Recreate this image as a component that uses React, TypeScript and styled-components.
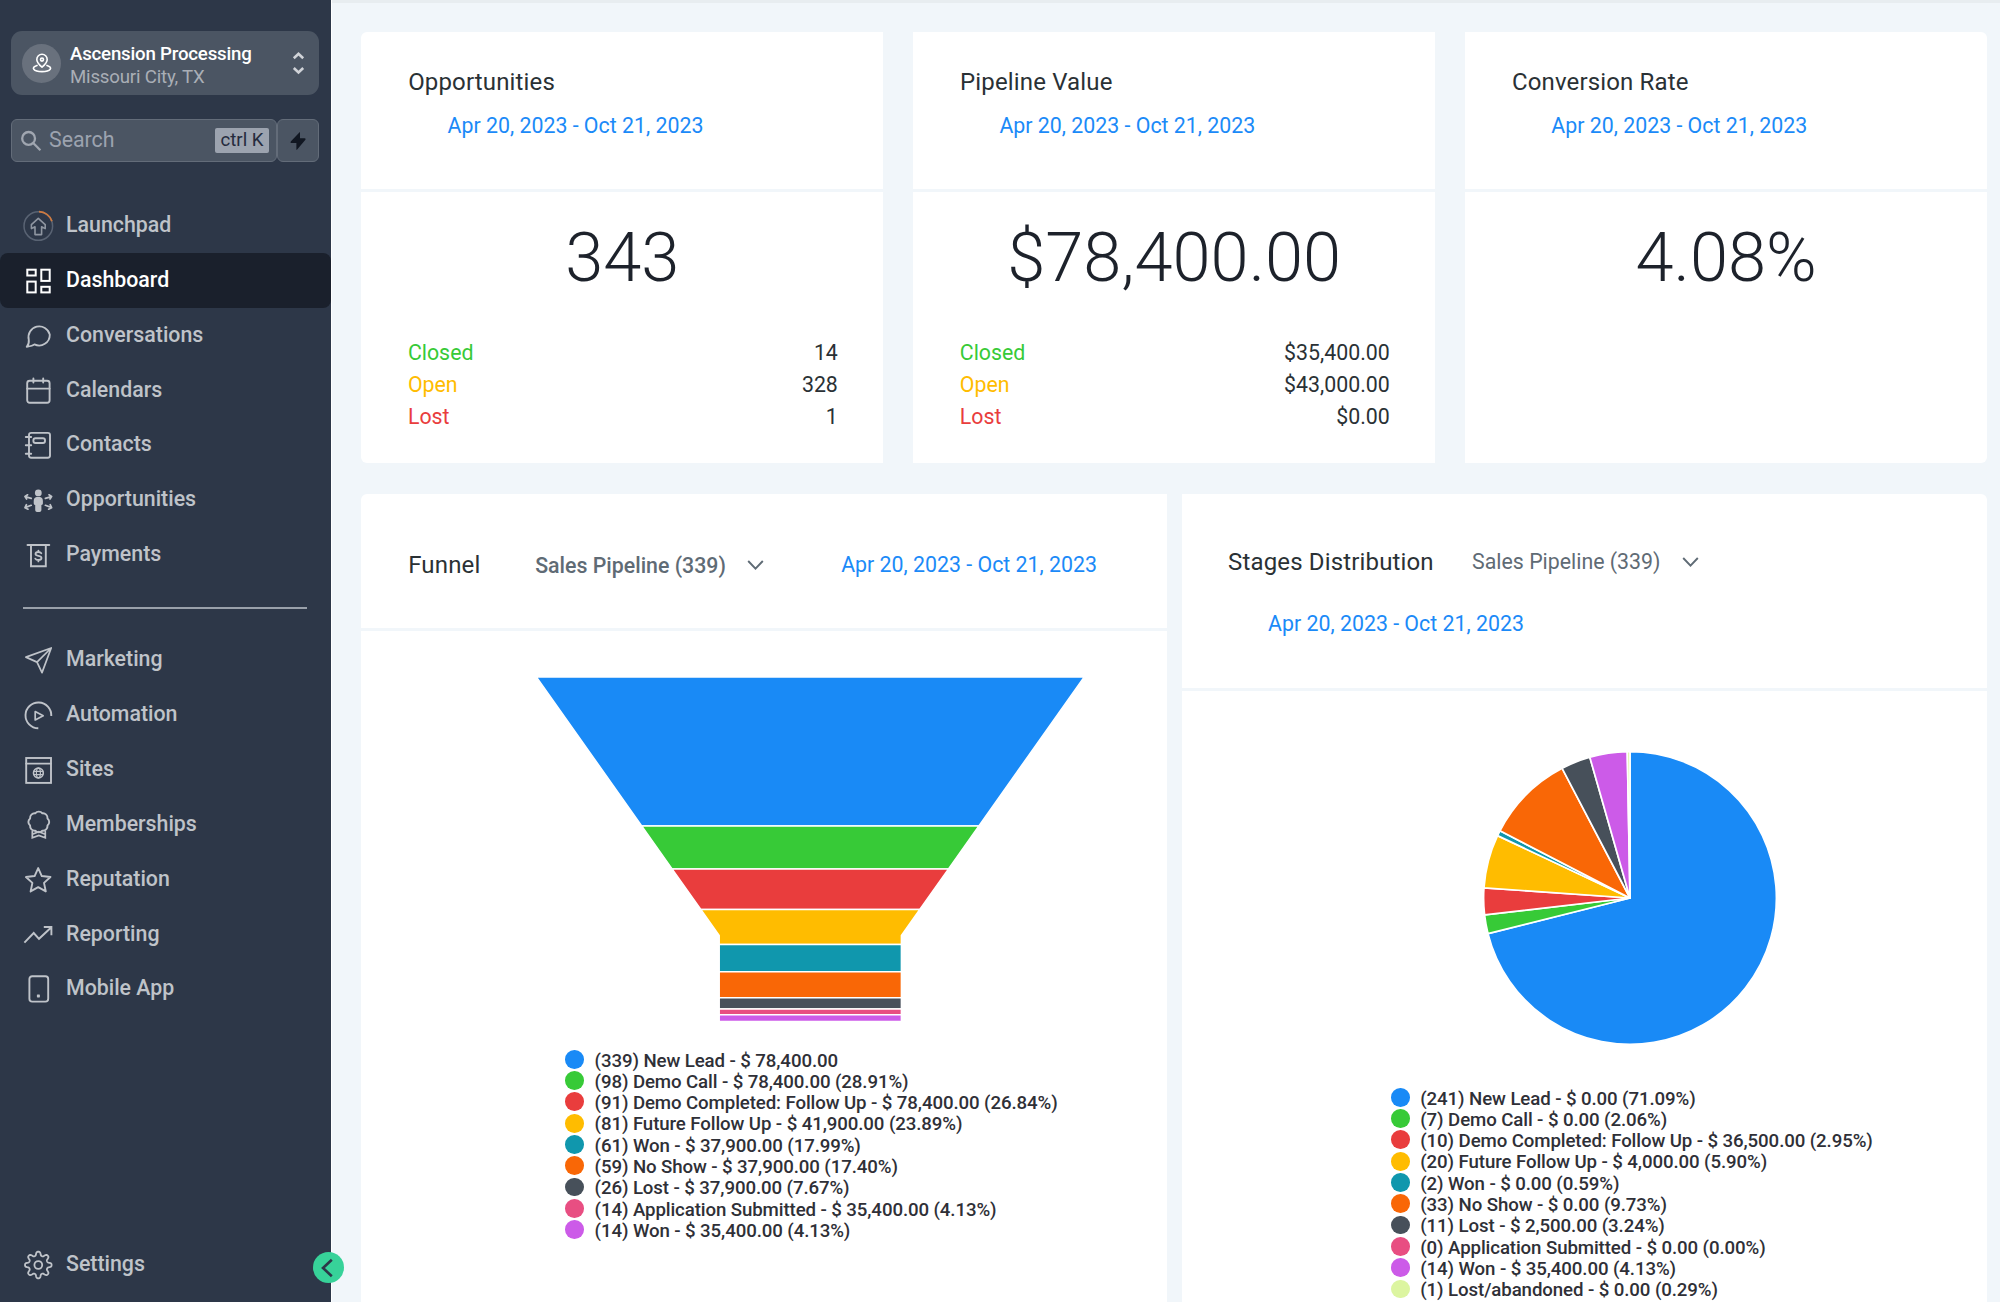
import React from 'react';
import styled, { createGlobalStyle } from 'styled-components';

const GlobalStyle = createGlobalStyle`
  * { box-sizing: border-box; }
  body { margin: 0; background: #f1f6fa; overflow: hidden; }
`;

const Page = styled.div`
  display: flex;
  width: 2000px;
  height: 1302px;
  overflow: hidden;
  font-family: Roboto, 'Liberation Sans', sans-serif;
  font-size: 21.33px;
  color: #2a3135;
`;

/* Sidebar */

const Sidebar = styled.aside`
  position: relative;
  display: flex;
  flex-direction: column;
  flex: none;
  width: 332px;
  height: 1302px;
  padding-top: 31px;
  background: #2d3748;
  border-right: 1px solid #fff;
`;

const Account = styled.div`
  display: flex;
  align-items: center;
  height: 64px;
  margin: 0 12px 0 11px;
  padding: 0 13px 0 11px;
  border-radius: 11px;
  background: #4b5563;
`;

const Avatar = styled.div`
  display: flex;
  align-items: center;
  justify-content: center;
  width: 39px;
  height: 39px;
  border-radius: 50%;
  background: #69717d;
`;

const AccountText = styled.div`
  flex: 1;
  margin-left: 9px;
  padding-top: 5px;
  font-size: 18.67px;
  line-height: 23px;
  letter-spacing: -0.2px;
  white-space: nowrap;
`;

const AccountName = styled.div`
  color: #fff;
  font-weight: 500;
`;

const AccountPlace = styled.div`
  color: #a9aeb6;
`;

const SearchRow = styled.div`
  display: flex;
  height: 43px;
  margin: 24px 12px 0 11px;
`;

const SearchBox = styled.div`
  display: flex;
  align-items: center;
  width: 266px;
  padding: 0 7px 0 8px;
  border: 1px solid #636c79;
  border-radius: 6px;
  background: #4b5563;
`;

const Placeholder = styled.span`
  flex: 1;
  margin-left: 7px;
  margin-top: -3px;
  color: #9ca3af;
`;

const Shortcut = styled.span`
  width: 54px;
  height: 25px;
  border-radius: 2px;
  background: #9ca3af;
  color: #252b3d;
  font-size: 18.67px;
  line-height: 24px;
  text-align: center;
  white-space: nowrap;
`;

const BoltButton = styled.div`
  display: flex;
  align-items: center;
  justify-content: center;
  flex: 1;
  border: 1px solid #636c79;
  border-radius: 6px;
  background: #4b5563;
`;

const Nav = styled.nav`
  display: flex;
  flex-direction: column;
`;

const MainNav = styled(Nav)`
  margin-top: 36.5px;
`;

const SettingsNav = styled(Nav)`
  margin-top: auto;
  margin-bottom: 9.3px;
`;

const NavItem = styled.div<{ $active?: boolean }>`
  display: flex;
  align-items: center;
  height: 54.83px;
  padding-left: 22px;
  border-radius: 8px;
  background: ${p => (p.$active ? '#1a202c' : 'transparent')};
  color: ${p => (p.$active ? '#fff' : '#bfc3c9')};
`;

const NavLabel = styled.span`
  margin-left: 12px;
  padding-bottom: 1.6px;
  font-weight: 500;
  line-height: 26px;
`;

const NavIcon = styled.svg`
  width: 32px;
  height: 32px;
  fill: none;
  stroke: currentColor;
  stroke-width: 1.9;
  stroke-linecap: round;
  stroke-linejoin: round;
`;

const Separator = styled.div`
  height: 2px;
  margin: 24.3px 24.5px 24.2px 23px;
  background: #99a0aa;
`;

const Collapse = styled.button`
  position: absolute;
  left: 313px;
  top: 1252px;
  display: flex;
  align-items: center;
  justify-content: center;
  width: 31px;
  height: 31px;
  padding: 0 3px 0 0;
  border: 0;
  border-radius: 50%;
  background: #37d299;
`;

/* Content */

const Main = styled.main`
  flex: 1;
  display: flex;
  flex-direction: column;
  border-top: 3px solid #e8edf0;
  padding: 29px 13px 0 29.4px;
  background: #f1f6fa;
`;

const StatGrid = styled.div`
  display: grid;
  grid-template-columns: repeat(3, 1fr);
  gap: 30px;
  height: 431px;
`;

const ChartGrid = styled.div`
  display: grid;
  grid-template-columns: repeat(2, 1fr);
  gap: 15px;
  flex: 1;
  margin-top: 31px;
`;

const Card = styled.section<{ $radius: string }>`
  background: #fff;
  border-radius: ${p => p.$radius};
`;

const StatHeader = styled.header`
  height: 160px;
  padding: 35px 46.8px 0;
  border-bottom: 3px solid #f1f6fa;
`;

const Title = styled.h2<{ $width?: number }>`
  margin: 0;
  width: ${p => (p.$width ? p.$width + 'px' : 'auto')};
  font-size: 24px;
  font-weight: 400;
  line-height: 30px;
  letter-spacing: 0.15px;
  white-space: nowrap;
`;

const DateRange = styled.div`
  color: #1b8af8;
  line-height: 28px;
  white-space: nowrap;
`;

const StatDate = styled(DateRange)`
  margin: 15px 0 0 39.4px;
`;

const BigNumber = styled.div`
  padding-top: 26px;
  color: #1d222b;
  font-size: 68.6px;
  font-weight: 300;
  line-height: 80px;
  text-align: center;
`;

const StatRows = styled.div`
  margin: 38.5px 45.4px 0 46.5px;
`;

const StatRow = styled.div`
  display: flex;
  justify-content: space-between;
  line-height: 32px;
`;

const StatLabel = styled.span<{ $color: string }>`
  color: ${p => p.$color};
`;

const FunnelHeader = styled.header`
  display: flex;
  align-items: center;
  height: 137px;
  padding: 8px 0 0 46.8px;
  border-bottom: 3px solid #f1f6fa;
`;

const FunnelDate = styled(DateRange)`
  margin-left: 77px;
`;

const StagesHeader = styled.header`
  height: 196.5px;
  padding: 52.7px 0 0 46.4px;
  border-bottom: 3px solid #f1f6fa;
`;

const StagesTop = styled.div`
  display: flex;
  align-items: center;
`;

const StagesDate = styled(DateRange)`
  margin: 33.3px 0 0 40px;
`;

const Picker = styled.div<{ $weight: number; $gap: number }>`
  display: flex;
  align-items: center;
  gap: ${p => p.$gap}px;
  color: #5f6b75;
  font-weight: ${p => p.$weight};
  line-height: 28px;
  white-space: nowrap;
`;

const PickerLabel = styled.span`
  width: 190px;
  padding-top: 1px;
`;

const FunnelSvg = styled.svg`
  display: block;
  width: 550px;
  height: 348px;
  margin: 44px 0 0 174px;
`;

const PieSvg = styled.svg`
  display: block;
  width: 294px;
  height: 294px;
  margin: 60px 0 0 301.4px;
`;

const Legend = styled.ul<{ $left: number; $top: number }>`
  margin: ${p => p.$top}px 0 0 ${p => p.$left}px;
  padding: 0;
  list-style: none;
  color: #2f3037;
  font-size: 18.67px;
  font-weight: 500;
  letter-spacing: -0.1px;
`;

const LegendItem = styled.li`
  display: flex;
  align-items: center;
  height: 21.33px;
  line-height: 21.33px;
  white-space: nowrap;
`;

const LegendDot = styled.i<{ $color: string }>`
  flex: none;
  width: 18.7px;
  height: 18.7px;
  margin: 0 10.7px 4px 0;
  border-radius: 50%;
  background: ${p => p.$color};
`;

/* Icons */

const polar = (cx: number, cy: number, r: number, a: number) => [
  cx + r * Math.cos(a),
  cy + r * Math.sin(a),
];

const gearPoints = Array.from({ length: 160 }, (_, i) => {
  const a = (i / 160) * Math.PI * 2;
  const wave = Math.tanh(1.6 * Math.cos(8 * a)) / Math.tanh(1.6);
  return polar(16.3, 16, 11.4 + 1.9 * wave, a).map(v => v.toFixed(2)).join(' ');
});

const badgePath =
  Array.from({ length: 9 }, (_, i) => {
    const [x, y] = polar(16.8, 13, 9.4, ((i + 0.5) / 8) * Math.PI * 2);
    return i === 0 ? `M${x} ${y}` : `A4.6 4.6 0 0 1 ${x} ${y}`;
  }).join('') + 'Z';

const starPoints = Array.from({ length: 10 }, (_, i) =>
  polar(16.2, 17, i % 2 ? 6.1 : 12.9, (i / 10) * Math.PI * 2 - Math.PI / 2).join(','),
).join(' ');

const icons: Record<string, React.ReactNode> = {
  Launchpad: (
    <>
      <circle cx="16.3" cy="16" r="14.3" stroke="#596373" strokeWidth="1.5" />
      <path d="M17 1.7A14.3 14.3 0 0 1 29.9 11.2" stroke="#cf7a3f" strokeWidth="1.8" strokeLinecap="butt" />
      <path d="M16.3 8.4 9.4 14.6V18.6L13 16.8V24.6H19.6V16.8L23.2 18.6V14.6Z" stroke="#8f96a1" strokeWidth="1.6" />
    </>
  ),
  Dashboard: (
    <g strokeLinejoin="miter" strokeWidth="2">
      <rect x="5.3" y="4.7" width="8.4" height="5.8" />
      <rect x="5.3" y="16.6" width="8.4" height="10.8" />
      <rect x="19.3" y="4.7" width="8.4" height="11.2" />
      <rect x="19.3" y="21.8" width="8.4" height="5.6" />
    </g>
  ),
  Conversations: (
    <path
      transform="translate(.9 .3) scale(1.28)"
      strokeWidth="1.45"
      d="M21 11.2A8.3 8.3 0 0 1 9 18.8Q7.8 19.8 3 20.8 5 18.5 4.6 15.2A8.3 8.3 0 1 1 21 11.2Z"
    />
  ),
  Calendars: (
    <>
      <rect x="5.2" y="6.8" width="22.4" height="22" rx="2.5" />
      <path d="M5.2 14.6H27.6M11.4 4.4V8.6M21.2 4.4V8.6" />
    </>
  ),
  Contacts: (
    <>
      <rect x="7" y="3.9" width="21" height="24.9" rx="2.2" />
      <rect x="11.4" y="9.2" width="11.6" height="4.8" rx="2" />
      <path d="M3.8 8H9.2M3.8 16.3H9.2M3.8 24.8H9.2" />
    </>
  ),
  Opportunities: (
    <>
      <g fill="currentColor" stroke="none">
        <circle cx="16.3" cy="8.9" r="3.4" />
        <path d="M14.6 13H18Q20.9 13.6 20.9 17V19.5Q20.6 21 19.4 21V26.3Q19.2 28 17.6 28H15Q13.4 28 13.2 26.3V21Q12 21 11.7 19.5V17Q11.7 13.6 14.6 13Z" />
      </g>
      <path
        strokeWidth="1.7"
        d="M9.2 14.4 3.2 12.6M5.6 10.8 3 12.5 4.6 15M23.4 14.4 29.4 12.6M27 10.8 29.6 12.5 28 15M9.2 21.3 3.6 23.4M4.4 20.7 3 23.7 6 25.2M23.4 21.3 29 23.4M28.2 20.7 29.6 23.7 26.6 25.2"
      />
    </>
  ),
  Payments: (
    <>
      <path d="M5.5 6H27.3M9 6.4V27.2H23.8V6.4" strokeLinejoin="miter" />
      <path
        strokeWidth="1.8"
        d="M19.3 14.2Q18.4 13 16.4 13 13.5 13 13.5 15 13.5 16.4 16.4 16.8 19.5 17.2 19.5 19 19.5 21 16.4 21 14.1 21 13.3 19.6M16.4 11.6V13M16.4 21V22.4"
      />
    </>
  ),
  Marketing: <path strokeWidth="1.7" d="M3.9 13.1 29.2 4 20 28.6 15 18.1ZM15 18.1 29.2 4" />,
  Automation: (
    <>
      <path strokeLinecap="butt" d="M16.3 29.3A12.9 12.9 0 1 1 29.3 17" />
      <path strokeWidth="1.7" d="M13.2 12.6V21L21.2 16.8Z" />
    </>
  ),
  Sites: (
    <>
      <rect x="4.2" y="4" width="24.8" height="24.9" strokeLinejoin="miter" />
      <path d="M4.2 9.6H29" />
      <circle cx="16.4" cy="19" r="4.9" strokeWidth="1.6" />
      <ellipse cx="16.4" cy="19" rx="2" ry="4.9" strokeWidth="1.2" />
      <path strokeWidth="1.2" d="M12 17.4H20.8M12 20.6H20.8" />
    </>
  ),
  Memberships: (
    <>
      <path d={badgePath} />
      <path d="M10.3 22.6V28.8L16.8 26.4 23.3 28.8V22.6M11 25 16.8 22.6 22.6 25" strokeWidth="1.7" strokeLinejoin="miter" />
    </>
  ),
  Reputation: <polygon points={starPoints} />,
  Reporting: <path strokeLinecap="butt" strokeLinejoin="miter" d="M2.4 24.6 11.7 15 17 20.8 29.4 9.3M21.8 9H29.4V17.2" />,
  'Mobile App': (
    <>
      <rect x="7.4" y="3.2" width="18.8" height="25.4" rx="2.8" />
      <rect x="14.9" y="21.4" width="3" height="3" rx=".6" fill="currentColor" stroke="none" />
    </>
  ),
  Settings: (
    <>
      <path d={'M' + gearPoints.join('L') + 'Z'} strokeWidth="1.8" />
      <circle cx="16.3" cy="16" r="3.9" strokeWidth="1.8" />
    </>
  ),
};

const NavEntry = ({ label, active }: { label: string; active?: boolean }) => (
  <NavItem $active={active}>
    <NavIcon viewBox="0 0 32 32">{icons[label]}</NavIcon>
    <NavLabel>{label}</NavLabel>
  </NavItem>
);

const ChevronDown = () => (
  <svg width="17" height="12" viewBox="0 0 17 12" fill="none" stroke="#5f6b75" strokeWidth="1.9">
    <path d="M1.2 2 8.5 9.6 15.8 2" />
  </svg>
);

/* Data */

const blue = '#198af6';
const palette = [blue, '#37ca37', '#e93d3d', '#ffbc00', '#1097ad', '#f96706', '#47505a', '#e84e82', '#cc5be8', '#dcf5a0'];

const stats = [
  {
    title: 'Opportunities',
    value: '343',
    rows: ['14', '328', '1'],
    radius: '6px 0 0 6px',
  },
  {
    title: 'Pipeline Value',
    value: '$78,400.00',
    rows: ['$35,400.00', '$43,000.00', '$0.00'],
    radius: '0',
  },
  { title: 'Conversion Rate', value: '4.08%', rows: [], radius: '0 6px 6px 0' },
];

const statuses = [
  ['Closed', '#37ca37'],
  ['Open', '#ffbc00'],
  ['Lost', '#e93d3d'],
];

const funnelLegend = [
  '(339) New Lead - $ 78,400.00',
  '(98) Demo Call - $ 78,400.00 (28.91%)',
  '(91) Demo Completed: Follow Up - $ 78,400.00 (26.84%)',
  '(81) Future Follow Up - $ 41,900.00 (23.89%)',
  '(61) Won - $ 37,900.00 (17.99%)',
  '(59) No Show - $ 37,900.00 (17.40%)',
  '(26) Lost - $ 37,900.00 (7.67%)',
  '(14) Application Submitted - $ 35,400.00 (4.13%)',
  '(14) Won - $ 35,400.00 (4.13%)',
];

const stagesLegend = [
  '(241) New Lead - $ 0.00 (71.09%)',
  '(7) Demo Call - $ 0.00 (2.06%)',
  '(10) Demo Completed: Follow Up - $ 36,500.00 (2.95%)',
  '(20) Future Follow Up - $ 4,000.00 (5.90%)',
  '(2) Won - $ 0.00 (0.59%)',
  '(33) No Show - $ 0.00 (9.73%)',
  '(11) Lost - $ 2,500.00 (3.24%)',
  '(0) Application Submitted - $ 0.00 (0.00%)',
  '(14) Won - $ 35,400.00 (4.13%)',
  '(1) Lost/abandoned - $ 0.00 (0.29%)',
];

const dates = 'Apr 20, 2023 - Oct 21, 2023';

/* Charts */

const funnelStops = [-0.6, 148.4, 191.6, 232, 267, 294.3, 320.3, 331.4, 337.2, 343.9];
const neckY = 258;
const funnelEdge = (y: number) => (y >= neckY ? 182.4 : (y / neckY) * 182.4) - 1.2;

const Funnel = () => (
  <FunnelSvg viewBox="-3 -2.5 550 348">
    {funnelStops.slice(0, -1).map((y0, i) => {
      const y1 = funnelStops[i + 1];
      const ys = y0 < neckY && y1 > neckY ? [y0, neckY, y1] : [y0, y1];
      const left = ys.map(y => `${funnelEdge(y)},${y}`);
      const right = ys.map(y => `${544.6 - funnelEdge(y)},${y}`).reverse();
      return (
        <polygon key={i} points={[...left, ...right].join(' ')} fill={palette[i]} stroke="#fff" strokeWidth="1.5" />
      );
    })}
  </FunnelSvg>
);

const pieCounts = [241, 7, 10, 20, 2, 33, 11, 0, 14, 1];

const Pie = () => {
  const total = pieCounts.reduce((a, b) => a + b, 0);
  let sum = 0;
  return (
    <PieSvg viewBox="-147 -147 294 294">
      {pieCounts.map((n, i) => {
        if (!n) return null;
        const a0 = (sum / total) * Math.PI * 2 - Math.PI / 2;
        sum += n;
        const a1 = (sum / total) * Math.PI * 2 - Math.PI / 2;
        const [x0, y0] = polar(0, 0, 146.4, a0);
        const [x1, y1] = polar(0, 0, 146.4, a1);
        return (
          <path
            key={i}
            d={`M0 0L${x0} ${y0}A146.4 146.4 0 ${a1 - a0 > Math.PI ? 1 : 0} 1 ${x1} ${y1}Z`}
            fill={palette[i]}
            stroke="#fff"
            strokeWidth="1.7"
            strokeLinejoin="round"
          />
        );
      })}
    </PieSvg>
  );
};

const LegendList = ({ items, left, top }: { items: string[]; left: number; top: number }) => (
  <Legend $left={left} $top={top}>
    {items.map((text, i) => (
      <LegendItem key={i}>
        <LegendDot $color={palette[i]} />
        {text}
      </LegendItem>
    ))}
  </Legend>
);

export default function App() {
  return (
    <>
      <GlobalStyle />
      <Page>
        <Sidebar>
          <Account>
            <Avatar>
              <svg width="20" height="20" viewBox="0 0 20 20" fill="none" stroke="#fff" strokeWidth="1.6" strokeLinejoin="round">
                <path d="M10 14.2Q4.8 9.6 4.8 6.4A5.2 5.2 0 0 1 15.2 6.4Q15.2 9.6 10 14.2Z" />
                <circle cx="10" cy="6.6" r="1.5" />
                <path d="M5 12.4C-1.6 14.4 1.4 18.6 10 18.6S21.6 14.4 15 12.4" strokeLinecap="round" />
              </svg>
            </Avatar>
            <AccountText>
              <AccountName>Ascension Processing</AccountName>
              <AccountPlace>Missouri City, TX</AccountPlace>
            </AccountText>
            <svg width="15" height="26" viewBox="0 0 15 26" fill="none" stroke="#d0d3d8" strokeWidth="2.6">
              <path d="M2.8 8.2 7.5 3.8 12.2 8.2M2.8 18 7.5 22.4 12.2 18" />
            </svg>
          </Account>
          <SearchRow>
            <SearchBox>
              <svg width="22" height="22" viewBox="0 0 22 22" fill="none" stroke="#a0a6b0" strokeWidth="2.3">
                <circle cx="8.6" cy="8.4" r="6.4" />
                <path d="M13.2 13 20.4 20.2" />
              </svg>
              <Placeholder>Search</Placeholder>
              <Shortcut>ctrl K</Shortcut>
            </SearchBox>
            <BoltButton>
              <svg width="18" height="20" viewBox="0 0 18 20" fill="#111722">
                <path d="M10.6 1.2Q11 .6 11 1.6V7.2H15.6Q17.4 7.2 16.2 9L8.2 18.6Q7.4 19.4 7.4 18.2V12H2.6Q.8 12 2 10.2Z" />
              </svg>
            </BoltButton>
          </SearchRow>
          <MainNav>
            {['Launchpad', 'Dashboard', 'Conversations', 'Calendars', 'Contacts', 'Opportunities', 'Payments'].map(l => (
              <NavEntry key={l} label={l} active={l === 'Dashboard'} />
            ))}
          </MainNav>
          <Separator />
          <Nav>
            {['Marketing', 'Automation', 'Sites', 'Memberships', 'Reputation', 'Reporting', 'Mobile App'].map(l => (
              <NavEntry key={l} label={l} />
            ))}
          </Nav>
          <SettingsNav>
            <NavEntry label="Settings" />
          </SettingsNav>
          <Collapse aria-label="Collapse sidebar">
            <svg width="14" height="20" viewBox="0 0 14 20" fill="none" stroke="#2d3748" strokeWidth="2.6">
              <path d="M11.8 1.8 3 10 11.8 18.2" />
            </svg>
          </Collapse>
        </Sidebar>
        <Main>
          <StatGrid>
            {stats.map(s => (
              <Card key={s.title} $radius={s.radius}>
                <StatHeader>
                  <Title>{s.title}</Title>
                  <StatDate>{dates}</StatDate>
                </StatHeader>
                <BigNumber>{s.value}</BigNumber>
                <StatRows>
                  {s.rows.map((v, i) => (
                    <StatRow key={i}>
                      <StatLabel $color={statuses[i][1]}>{statuses[i][0]}</StatLabel>
                      <span>{v}</span>
                    </StatRow>
                  ))}
                </StatRows>
              </Card>
            ))}
          </StatGrid>
          <ChartGrid>
            <Card $radius="6px 0 0 0">
              <FunnelHeader>
                <Title $width={127}>Funnel</Title>
                <Picker $weight={500} $gap={22}>
                  <PickerLabel>Sales Pipeline (339)</PickerLabel>
                  <ChevronDown />
                </Picker>
                <FunnelDate>{dates}</FunnelDate>
              </FunnelHeader>
              <Funnel />
              <LegendList items={funnelLegend} left={203.8} top={27.5} />
            </Card>
            <Card $radius="0 6px 0 0">
              <StagesHeader>
                <StagesTop>
                  <Title $width={244}>Stages Distribution</Title>
                  <Picker $weight={400} $gap={19.5}>
                    <PickerLabel>Sales Pipeline (339)</PickerLabel>
                    <ChevronDown />
                  </Picker>
                </StagesTop>
                <StagesDate>{dates}</StagesDate>
              </StagesHeader>
              <Pie />
              <LegendList items={stagesLegend} left={209.2} top={44} />
            </Card>
          </ChartGrid>
        </Main>
      </Page>
    </>
  );
}
